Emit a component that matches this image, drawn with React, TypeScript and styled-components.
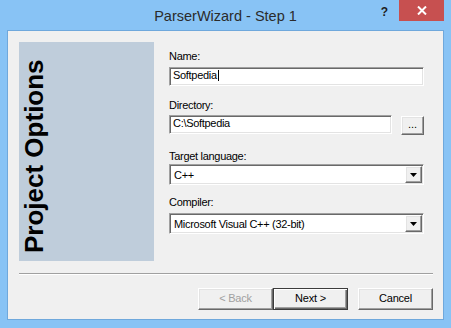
import React from "react";
import styled, { createGlobalStyle, css } from "styled-components";

const GlobalStyle = createGlobalStyle`
  html, body {
    margin: 0;
    padding: 0;
    background: #88c3f5;
  }
  body {
    font-family: "Liberation Sans", Arial, sans-serif;
  }
`;

const sunken = css`
  box-sizing: border-box;
  background: #ffffff;
  border: 1px solid;
  border-color: #a0a0a0 #ffffff #ffffff #a0a0a0;
  box-shadow: inset 1px 1px 0 #696969, inset -1px -1px 0 #e3e3e3;
`;

const raised = css`
  box-sizing: border-box;
  background: #f0f0f0;
  border: 1px solid;
  border-color: #ffffff #696969 #696969 #ffffff;
  box-shadow: inset -1px -1px 0 #a0a0a0, inset 1px 1px 0 #e3e3e3;
`;

const Frame = styled.div`
  width: 451px;
  height: 328px;
  background: #88c3f5;
  display: flex;
  flex-direction: column;
  overflow: hidden;
`;

const TitleBar = styled.div`
  height: 30px;
  display: grid;
  grid-template-columns: 72px 1fr 72px;
  color: #2b2b2b;
`;

const Title = styled.div`
  grid-column: 2;
  text-align: center;
  font-size: 14.5px;
  line-height: 30px;
  padding-top: 1px;
`;

const Controls = styled.div`
  display: flex;
  justify-content: flex-end;
  align-items: flex-start;
  padding-right: 7px;
`;

const HelpMark = styled.span`
  font-size: 12px;
  font-weight: bold;
  line-height: 12px;
  margin-top: 6px;
  margin-right: 11px;
  color: #1e1e1e;
`;

const CloseButton = styled.div`
  width: 45px;
  height: 21px;
  background: #c75050;
  display: flex;
  align-items: center;
  justify-content: center;
`;

const Client = styled.div`
  margin: 0 7px;
  height: 290px;
  box-sizing: border-box;
  border: 1px solid #6fa8dc;
  background: #f0f0f0;
  padding: 11px 10px 9px 11px;
  display: flex;
  flex-direction: column;
`;

const Body = styled.div`
  display: flex;
  height: 219px;
  gap: 15px;
`;

const SidePanel = styled.div`
  width: 135px;
  background: #bfcddb;
  display: flex;
  padding: 0 0 8px 0;
  box-sizing: border-box;
`;

const SideCaption = styled.div`
  writing-mode: vertical-rl;
  transform: rotate(180deg);
  font-size: 26px;
  font-weight: bold;
  line-height: 30px;
  color: #000;
  white-space: nowrap;
`;

const Form = styled.div`
  width: 255px;
  padding-top: 8px;
  display: flex;
  flex-direction: column;
  font-size: 11px;
  letter-spacing: -0.3px;
  color: #000;
`;

const Label = styled.div<{ $top: number; $below: number }>`
  line-height: 13px;
  height: 13px;
  margin-top: ${({ $top }) => $top}px;
  margin-bottom: ${({ $below }) => $below}px;
`;

const TextBox = styled.div<{ $width?: number }>`
  ${sunken};
  width: ${({ $width }) => ($width ? `${$width}px` : "100%")};
  height: 19px;
  padding: 1px 0 0 3px;
  line-height: 13px;
  display: flex;
  align-items: flex-start;
  white-space: nowrap;
`;

const Caret = styled.span`
  display: inline-block;
  width: 1px;
  height: 11px;
  margin: 1px 0 0 1px;
  background: #000;
`;

const PathRow = styled.div`
  display: flex;
  gap: 9px;
  align-items: flex-start;
`;

const BrowseButton = styled.div`
  ${raised};
  width: 23px;
  height: 19px;
  margin-top: 1px;
  text-align: center;
  line-height: 14px;
  letter-spacing: 0;
`;

const Combo = styled.div`
  ${sunken};
  height: 21px;
  display: flex;
  align-items: stretch;
  padding: 1px;
`;

const ComboValue = styled.div`
  flex: 1;
  padding: 3px 0 0 3px;
  line-height: 13px;
  white-space: nowrap;
`;

const ComboArrow = styled.div`
  ${raised};
  width: 17px;
  display: flex;
  align-items: center;
  justify-content: center;
`;

const Separator = styled.div`
  margin-top: 12px;
  height: 1px;
  background: #a0a0a0;
  border-bottom: 1px solid #ffffff;
`;

const ButtonRow = styled.div`
  margin-top: 13px;
  display: flex;
  justify-content: flex-end;
`;

const WizardButton = styled.div<{ $primary?: boolean; $disabled?: boolean; $gap?: number }>`
  ${raised};
  width: 75px;
  height: 22px;
  margin-left: ${({ $gap }) => $gap ?? 0}px;
  font-size: 11px;
  letter-spacing: -0.2px;
  line-height: 19px;
  text-align: center;
  color: ${({ $disabled }) => ($disabled ? "#a0a0a0" : "#000")};
  ${({ $primary }) =>
    $primary &&
    css`
      border-color: #3c3c3c;
      box-shadow: inset 1px 1px 0 #ffffff, inset -1px -1px 0 #696969,
        inset -2px -2px 0 #a0a0a0;
    `}
`;

const DownArrow = () => (
  <svg width="7" height="4" viewBox="0 0 7 4">
    <polygon points="0,0 7,0 3.5,4" fill="#000" />
  </svg>
);

const App = () => {
  return (
    <>
      <GlobalStyle />
      <Frame>
        <TitleBar>
          <Title>ParserWizard - Step 1</Title>
          <Controls>
            <HelpMark>?</HelpMark>
            <CloseButton>
              <svg width="10" height="9" viewBox="0 0 10 9">
                <path d="M1 0.5 L9 8.5 M9 0.5 L1 8.5" stroke="#fff" strokeWidth="2" />
              </svg>
            </CloseButton>
          </Controls>
        </TitleBar>

        <Client>
          <Body>
            <SidePanel>
              <SideCaption>Project Options</SideCaption>
            </SidePanel>

            <Form>
              <Label $top={0} $below={4}>Name:</Label>
              <TextBox>
                Softpedia
                <Caret />
              </TextBox>

              <Label $top={13} $below={3}>Directory:</Label>
              <PathRow>
                <TextBox $width={224}>C:\Softpedia</TextBox>
                <BrowseButton>...</BrowseButton>
              </PathRow>

              <Label $top={15} $below={1}>Target language:</Label>
              <Combo>
                <ComboValue>C++</ComboValue>
                <ComboArrow>
                  <DownArrow />
                </ComboArrow>
              </Combo>

              <Label $top={11} $below={4}>Compiler:</Label>
              <Combo>
                <ComboValue>Microsoft Visual C++ (32-bit)</ComboValue>
                <ComboArrow>
                  <DownArrow />
                </ComboArrow>
              </Combo>
            </Form>
          </Body>

          <Separator />

          <ButtonRow>
            <WizardButton $disabled>&lt; Back</WizardButton>
            <WizardButton $primary>Next &gt;</WizardButton>
            <WizardButton $gap={10}>Cancel</WizardButton>
          </ButtonRow>
        </Client>
      </Frame>
    </>
  );
};

export default App;
